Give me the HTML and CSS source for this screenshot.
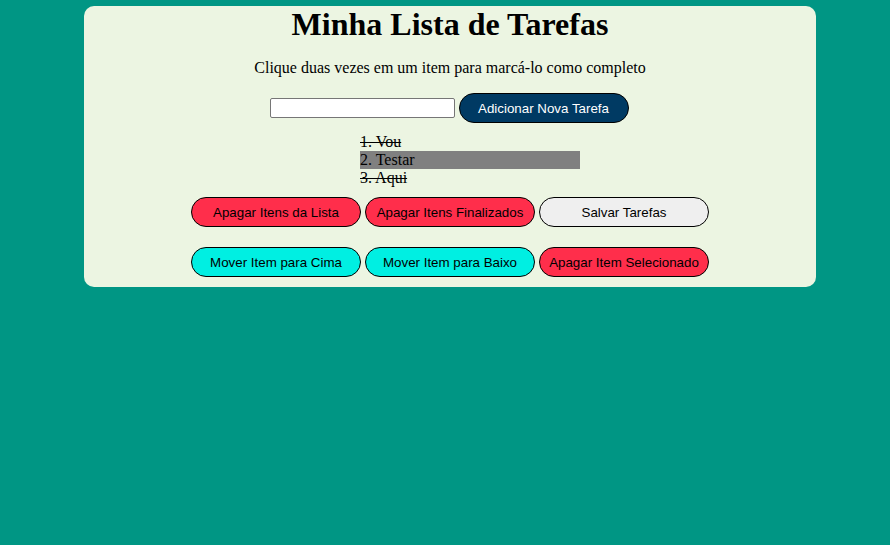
FILE: index.html
```html
<!DOCTYPE html>
<html lang="pt">
<head>
<meta charset="utf-8">
<title>Minha Lista de Tarefas</title>
<link rel="stylesheet" href="styles.css">
</head>
<body>
<main class="card">
  <h1 class="title">Minha Lista de Tarefas</h1>
  <p class="hint">Clique duas vezes em um item para marcá-lo como completo</p>
  <div class="add-row">
    <input class="task-input" type="text">
    <button class="btn btn-dark">Adicionar Nova Tarefa</button>
  </div>
  <ul class="tasks">
    <li class="task done">1. Vou</li>
    <li class="task selected">2. Testar</li>
    <li class="task done">3. Aqui</li>
  </ul>
  <div class="btn-row">
    <button class="btn btn-red">Apagar Itens da Lista</button>
    <button class="btn btn-red">Apagar Itens Finalizados</button>
    <button class="btn btn-gray">Salvar Tarefas</button>
  </div>
  <div class="btn-row btn-row-2">
    <button class="btn btn-cyan">Mover Item para Cima</button>
    <button class="btn btn-cyan">Mover Item para Baixo</button>
    <button class="btn btn-red">Apagar Item Selecionado</button>
  </div>
</main>
</body>
</html>
```
FILE: styles.css
```css
html, body {
  margin: 0;
  padding: 0;
}
body {
  background: #009684;
  font-family: "Liberation Serif", "Times New Roman", serif;
  color: #000;
  min-height: 545px;
  padding: 6px 0 0 10px;
  box-sizing: border-box;
}
.card {
  width: 732px;
  margin: 0 auto;
  background: #ecf5e2;
  border-radius: 10px;
  padding: 0 0 10px;
  box-sizing: border-box;
  text-align: center;
}
.title {
  margin: 0;
  font-size: 32px;
  font-weight: bold;
  line-height: 37px;
}
.hint {
  margin: 16px 0 16px;
  font-size: 16px;
  line-height: 18px;
}
.add-row {
  display: flex;
  justify-content: center;
  align-items: center;
  gap: 4px;
  height: 30px;
  padding-right: 2px;
}
.task-input {
  width: 185px;
  height: 20px;
  box-sizing: border-box;
  border: 1px solid #767676;
  border-radius: 2px;
  background: #fff;
  padding: 1px 2px;
  margin: 0;
  font-size: 13.33px;
}
.btn {
  width: 170px;
  height: 30px;
  box-sizing: border-box;
  border: 1px solid #000;
  border-radius: 15px;
  font-family: "Liberation Sans", Arial, sans-serif;
  font-size: 13.33px;
  color: #000;
  padding: 0;
  margin: 0;
}
.btn-dark {
  background: #003a63;
  color: #fff;
}
.btn-red {
  background: #ff2e4b;
}
.btn-gray {
  background: #efefef;
}
.btn-cyan {
  background: #00efe2;
}
.tasks {
  list-style: none;
  width: 260px;
  margin: 10px auto 10px;
  padding: 0 0 0 40px;
  box-sizing: border-box;
  text-align: left;
}
.task {
  font-size: 16px;
  line-height: 18px;
  height: 18px;
}
.task.done {
  text-decoration: line-through;
}
.task.selected {
  background: #808080;
}
.btn-row {
  display: flex;
  justify-content: center;
  gap: 4px;
}
.btn-row-2 {
  margin-top: 20px;
}
```
